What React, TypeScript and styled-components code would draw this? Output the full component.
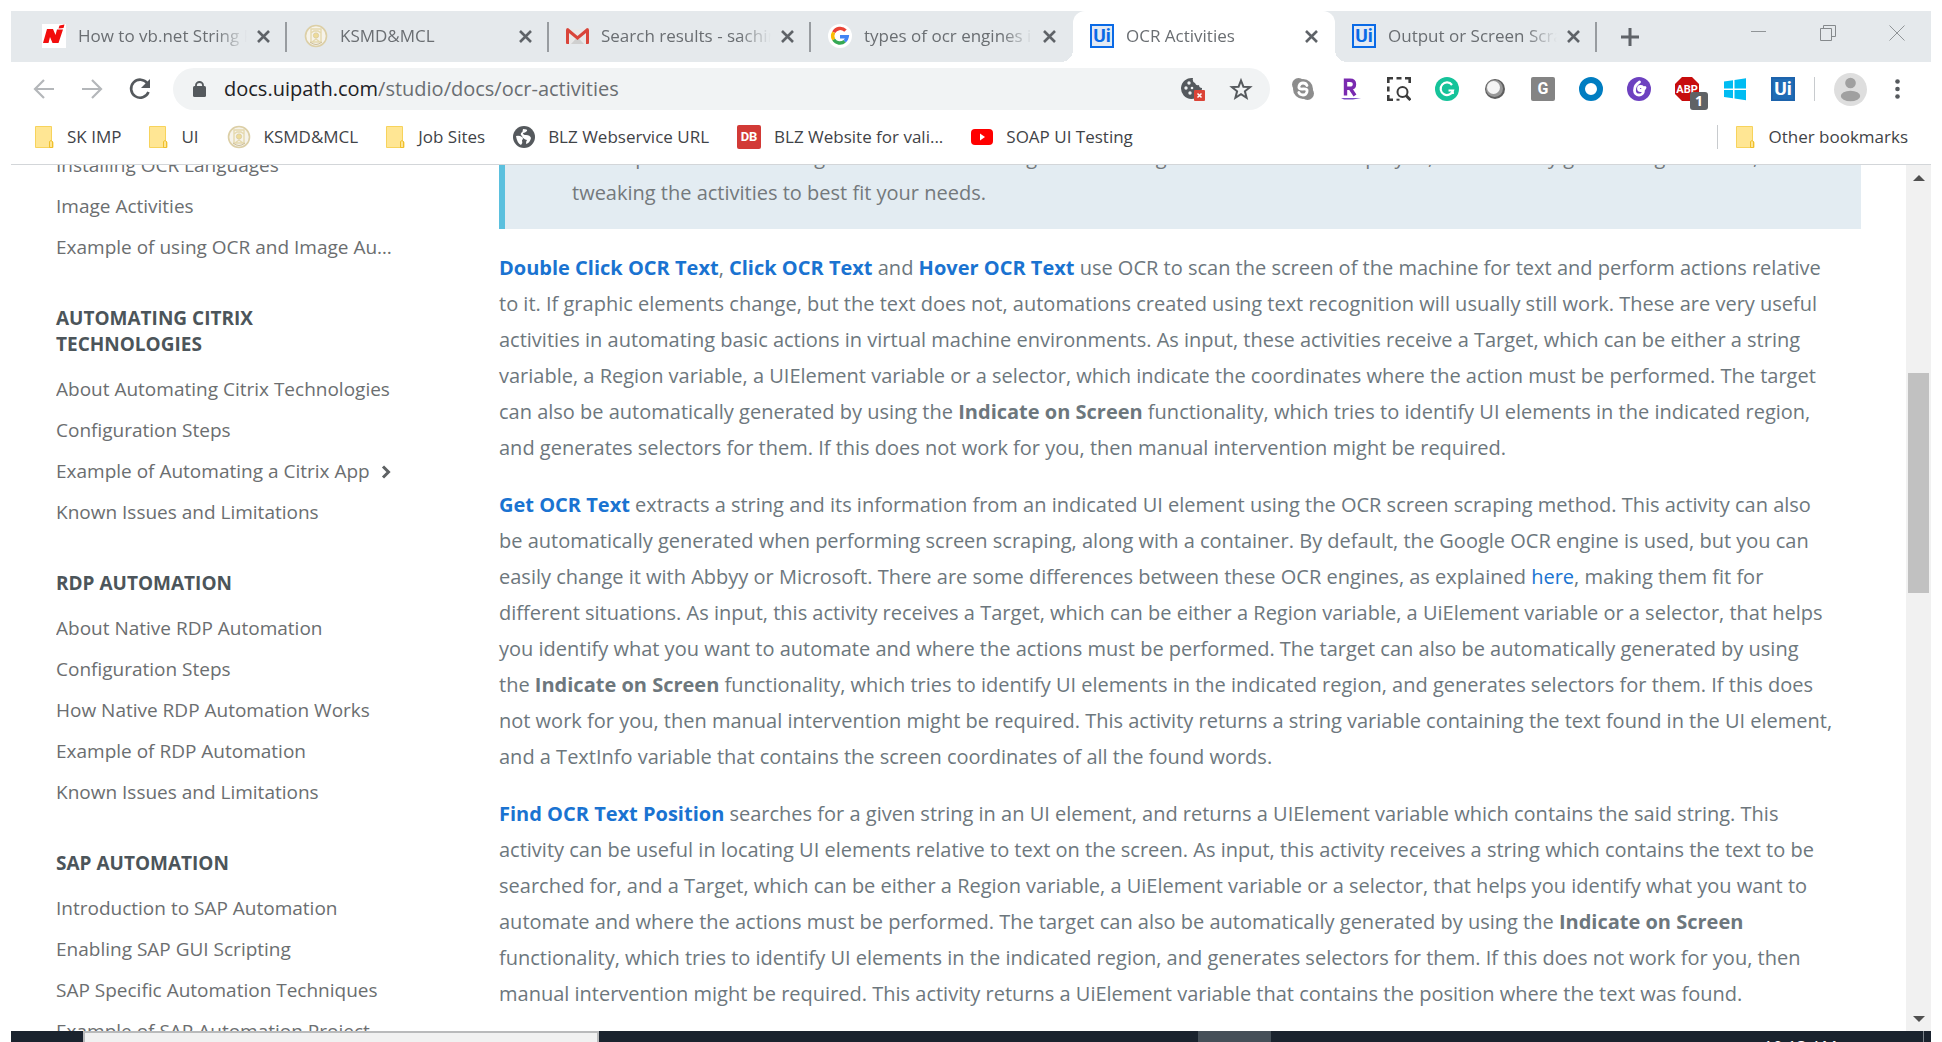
import React from "react";
import styled, { createGlobalStyle, css } from "styled-components";

const ui = `"Open Sans", "Noto Sans", sans-serif`;

const GlobalStyle = createGlobalStyle`
  * { box-sizing: border-box; }
  body { margin: 0; background: #fff; font-family: ${ui}; }
  button { border: 0; padding: 0; margin: 0; background: none; font: inherit; color: inherit; cursor: pointer; }
  a { color: inherit; text-decoration: none; }
  svg { display: block; flex: none; }
`;

const Screen = styled.div`
  display: flex;
  flex-direction: column;
  height: 100vh;
  padding: 11px 11px 0;
  overflow: hidden;
`;

/* ---------- tab strip ---------- */

const TabStrip = styled.header`
  display: flex;
  flex: none;
  height: 51px;
  padding-left: 14px;
  background: #e5e9ec;
`;

const Tabs = styled.nav`
  display: flex;
  flex: 0 1 1572px;
  min-width: 0;
`;

const TabBox = styled.div<{ $active?: boolean; $divider?: boolean }>`
  position: relative;
  display: flex;
  flex: 1 1 0;
  align-items: center;
  min-width: 0;
  padding: 0 17px 1px;
  color: #6a6e72;
  ${(p) =>
    p.$active &&
    css`
      background: #fff;
      border-radius: 12px 12px 0 0;
      &::before,
      &::after {
        content: "";
        position: absolute;
        bottom: 0;
        width: 12px;
        height: 12px;
      }
      &::before {
        left: -12px;
        background: radial-gradient(circle at 0 0, transparent 12px, #fff 12px);
      }
      &::after {
        right: -12px;
        background: radial-gradient(circle at 100% 0, transparent 12px, #fff 12px);
      }
    `}
  ${(p) =>
    p.$divider &&
    css`
      &::after {
        content: "";
        position: absolute;
        right: 0;
        top: 11px;
        width: 2px;
        height: 30px;
        background: #989ca0;
      }
    `}
`;

const TabButton = styled.button`
  display: flex;
  flex: 1;
  align-items: center;
  gap: 12px;
  min-width: 0;
  height: 100%;
  text-align: left;
`;

const TabTitle = styled.span`
  flex: 1;
  overflow: hidden;
  white-space: nowrap;
  font-size: 17px;
  line-height: 24px;
  margin-right: 10px;
  mask-image: linear-gradient(to right, #000 calc(100% - 32px), transparent);
`;

const NewTab = styled.button`
  display: flex;
  align-items: center;
  margin-left: 24px;
`;

const WindowControls = styled.div`
  display: flex;
  align-items: flex-start;
  gap: 53px;
  margin-left: auto;
  padding: 14px 26px 0 0;
`;

/* ---------- toolbar ---------- */

const Toolbar = styled.div`
  display: flex;
  flex: none;
  align-items: center;
  height: 54px;
  padding-right: 31px;
`;

const NavButtons = styled.div`
  display: flex;
  gap: 24px;
  padding: 0 21px;
`;

const AddressBar = styled.form`
  display: flex;
  flex: 1;
  align-items: center;
  min-width: 0;
  height: 42px;
  padding: 0 17px 0 20px;
  border-radius: 21px;
  background: #f1f3f4;
`;

const Address = styled.a`
  flex: 1;
  margin-left: 18px;
  font-size: 20px;
  line-height: 28px;
  color: #6a6e72;
  white-space: nowrap;
`;

const Host = styled.span`
  color: #202124;
`;

const AddressActions = styled.div`
  display: flex;
  gap: 24px;
`;

const Extensions = styled.div`
  display: flex;
  gap: 24px;
  margin-left: 21px;
`;

const ToolButton = styled.button`
  position: relative;
  display: flex;
  align-items: center;
  justify-content: center;
  width: 24px;
  height: 24px;
`;

const MenuButton = styled.button`
  display: flex;
  margin-left: 28px;
`;

const Divider = styled.span<{ $gap: number }>`
  width: 1px;
  height: 24px;
  margin: 0 ${(p) => p.$gap}px;
  background: #c8cbce;
`;

const Badge = styled.span`
  position: absolute;
  left: 15px;
  top: 15px;
  width: 18px;
  height: 18px;
  border-radius: 3px;
  background: #5f6265;
  color: #fff;
  font-size: 14px;
  font-weight: 700;
  line-height: 18px;
  text-align: center;
`;

const UiMark = styled.span<{ $solid?: boolean }>`
  display: flex;
  flex: none;
  align-items: center;
  justify-content: center;
  width: 24px;
  height: 24px;
  border: 2px solid ${(p) => (p.$solid ? "#1d63ac" : "#0a6ae6")};
  background: ${(p) => (p.$solid ? "#1f6cb5" : "#e3eaf4")};
  color: ${(p) => (p.$solid ? "#fff" : "#0a6ae6")};
  font-family: Roboto, sans-serif;
  font-size: 19px;
  font-weight: 700;
  line-height: 20px;
`;

const LetterTile = styled.span<{ $bg: string; $size: number }>`
  display: flex;
  flex: none;
  align-items: center;
  justify-content: center;
  width: 24px;
  height: 24px;
  border-radius: 2px;
  background: ${(p) => p.$bg};
  color: #fff;
  font-family: Roboto, sans-serif;
  font-size: ${(p) => p.$size}px;
  font-weight: 700;
  line-height: 24px;
`;

/* ---------- bookmarks ---------- */

const Bookmarks = styled.nav`
  display: flex;
  flex: none;
  align-items: center;
  height: 49px;
  padding: 0 23px 6px 24px;
  border-bottom: 1px solid #d3d6d9;
`;

const BookmarkList = styled.div`
  display: flex;
  gap: 28px;
`;

const Bookmark = styled.a`
  display: flex;
  align-items: center;
  gap: 13px;
  color: #3f4347;
  font-size: 17px;
  line-height: 24px;
  white-space: nowrap;
`;

const OtherBookmarks = styled.div`
  display: flex;
  align-items: center;
  margin-left: auto;
`;

/* ---------- page ---------- */

const Viewport = styled.div`
  display: flex;
  flex: 1;
  min-height: 0;
  overflow: hidden;
`;

const Sidebar = styled.aside`
  flex: 0 0 488px;
  margin-top: -20px;
  padding-left: 45px;
`;

const NavGroup = styled.section`
  width: 340px;
  margin-bottom: 37px;
`;

const GroupTitle = styled.h2`
  width: 260px;
  margin: 0 0 12px;
  color: #4c555a;
  font-size: 19px;
  font-weight: 700;
  line-height: 26px;
`;

const NavItem = styled.a`
  display: flex;
  align-items: center;
  gap: 11px;
  color: #6b6e70;
  font-size: 19px;
  line-height: 41px;
`;

const NavLabel = styled.span`
  overflow: hidden;
  white-space: nowrap;
  text-overflow: ellipsis;
`;

const Article = styled.main`
  flex: 1;
  min-width: 0;
  margin-top: -26px;
  padding-right: 45px;
  color: #6d777d;
  font-size: 20px;
  line-height: 36px;
`;

const Callout = styled.blockquote`
  margin: 0;
  padding: 0 0 18px 67px;
  border-left: 6px solid #5bc0de;
  background: #e3ecf2;
  color: #74797c;
`;

const Paragraph = styled.p`
  margin: 21px 0 0;
`;

const DocLink = styled.a<{ $strong?: boolean }>`
  color: #1a73d1;
  font-weight: ${(p) => (p.$strong ? 700 : 400)};
`;

const Scrollbar = styled.div`
  display: flex;
  flex: 0 0 25px;
  flex-direction: column;
  align-items: center;
  justify-content: space-between;
  padding: 10px 2px 9px;
  background: #f1f1f1;
`;

const Track = styled.div`
  flex: 1;
  align-self: stretch;
  padding-top: 192px;
`;

const Thumb = styled.div`
  height: 220px;
  background: #c1c1c1;
`;

/* ---------- taskbar ---------- */

const Taskbar = styled.footer`
  display: flex;
  flex: none;
  height: 11px;
  padding-left: 72px;
  overflow: hidden;
  background: #1a232e;
`;

const SearchBox = styled.input`
  width: 516px;
  height: 44px;
  border: 2px solid #b9babb;
  background: #f1f1f1;
`;

const RunningApp = styled.span`
  width: 73px;
  height: 44px;
  margin-left: 599px;
  background: #465059;
`;

const Clock = styled.time`
  margin-left: auto;
  margin-right: 7px;
  padding-right: 86px;
  border-right: 1px solid #7b838a;
  color: #fff;
  font-size: 17px;
  line-height: 32px;
`;

/* ---------- drawings ---------- */

const CloseIcon = () => (
  <svg width="13" height="13" viewBox="0 0 13 13" stroke="#5f6368" strokeWidth="2.6">
    <path d="M1 1l11 11M12 1L1 12" />
  </svg>
);

const NIcon = () => (
  <svg width="24" height="24" viewBox="0 0 24 24">
    <path fill="#fff" d="M0 0h24v24H0z" />
    <path fill="#f20d0d" d="M5 5h6l2.500 6L15 5.500h6L16.500 19h-6L8 13l-1.500 6H1z" />
    <path fill="#f20d0d" d="M17.500 1.500L22.500.500 21.500 4l-5 .5z" />
  </svg>
);

const SealIcon = () => (
  <svg width="24" height="24" viewBox="0 0 24 24" fill="none" stroke="#dccfa6">
    <circle cx="12" cy="12" r="10.5" fill="#f6f3ea" strokeWidth="1.6" />
    <path d="M7 5h10v13H7zM7 9l3-2h4l3 2M8 18l4-3 4 3" stroke="#e5d9ae" strokeWidth="1.4" />
    <circle cx="12" cy="11.5" r="2.6" fill="#efdc98" />
    <path d="M6 18q6 5 12 0" stroke="#cbbd99" />
  </svg>
);

const GmailIcon = () => (
  <svg width="23" height="24" viewBox="0 0 23 24">
    <path fill="#e8e8e8" d="M2 5h19v15H2z" />
    <path fill="#cfcfcf" d="M5 20l6.5-7 6.500 7z" />
    <path fill="#d9453a" d="M0 6q0-2 2-2l9.500 8L21 4q2 0 2 2v13q0 1-1 1h-2V9l-8.500 7L3 9v11H1q-1 0-1-1z" />
  </svg>
);

const GoogleIcon = () => (
  <svg width="24" height="24" viewBox="0 0 24 24">
    <circle cx="12" cy="12" r="12" fill="#fff" />
    <g fill="none" strokeWidth="3.4">
      <path stroke="#ea4335" d="M17.5 6.700A7.300 7.300 0 0 0 5.700 8.300" />
      <path stroke="#fbbc05" d="M5.700 8.300a7.300 7.300 0 0 0 0 7.400" />
      <path stroke="#34a853" d="M5.700 15.700a7.300 7.300 0 0 0 11 1.500" />
      <path stroke="#4285f4" d="M16.700 17.200a7.300 7.300 0 0 0 2.500-4.500H12" />
    </g>
  </svg>
);

const FolderIcon = () => (
  <svg width="19" height="22" viewBox="0 0 19 22">
    <path fill="#ffe694" stroke="#f7d35c" d="M.5.5h16v14l1.500 2v5H.5z" />
    <path fill="none" stroke="#efbf2d" d="M14.500 21.500v-6q1.500-2 3 0v6z" />
  </svg>
);

const GlobeIcon = () => (
  <svg width="22" height="22" viewBox="0 0 22 22">
    <circle cx="11" cy="11" r="11" fill="#55595d" />
    <path fill="#fff" d="M3 10q3-1 6 1 2 2 0 3 1 3-1 5-4-2-5-9zM10 3q5 0 4 2-2 2-4 2 0 2 3 2 4 0 5 3-1 5-5 6 0-3 1-4-4-1-5-4-2-1-1-3 2-1 2-4z" />
  </svg>
);

const YoutubeIcon = () => (
  <svg width="22" height="16" viewBox="0 0 22 16">
    <rect width="22" height="16" rx="4" fill="#f00" />
    <path fill="#fff" d="M9 4.500v7l5-3.500z" />
  </svg>
);

const ArrowIcon = ({ flip }: { flip?: boolean }) => (
  <svg width="24" height="24" viewBox="0 0 24 24" fill="none" stroke="#b4b7ba" strokeWidth="2.2">
    <path d={flip ? "M2 12h19M12 3l9 9-9 9" : "M22 12H3M12 3l-9 9 9 9"} />
  </svg>
);

const ReloadIcon = () => (
  <svg width="24" height="24" viewBox="0 0 24 24">
    <path fill="none" stroke="#55595d" strokeWidth="2.6" d="M19.500 6.500A9 9 0 1 0 20.500 15" />
    <path fill="#55595d" d="M22 2v9h-9z" />
  </svg>
);

const LockIcon = () => (
  <svg width="13" height="16" viewBox="0 0 13 16">
    <rect y="5" width="13" height="11" rx="1.5" fill="#55595d" />
    <path d="M3 6V4a3.500 3 0 0 1 7 0v2" fill="none" stroke="#55595d" strokeWidth="1.8" />
  </svg>
);

const CookieIcon = () => (
  <svg width="24" height="24" viewBox="0 0 24 24">
    <path fill="#55595d" d="M12 1a10.500 10.500 0 1 0 9 10q-3 0-3-3-3 1-4-2-3-1-2-5z" />
    <g fill="#f1f3f4">
      <circle cx="8" cy="6" r="1.7" />
      <circle cx="5" cy="11" r="1.7" />
      <circle cx="11" cy="11" r="1.3" />
      <circle cx="9" cy="16" r="1.7" />
    </g>
    <rect x="13" y="13" width="11" height="11" rx="1" fill="#db4437" />
    <path d="M16.500 16.500l4 4M20.500 16.500l-4 4" stroke="#fff" strokeWidth="1.5" />
  </svg>
);

const StarIcon = () => (
  <svg width="24" height="24" viewBox="0 0 24 24">
    <path fill="none" stroke="#55595d" strokeWidth="2" d="M12 3.500l2.400 6.200 6.700.4-5.200 4.200 1.700 6.500-5.600-3.600-5.600 3.600 1.700-6.500L2.900 10.100l6.700-.4z" />
  </svg>
);

const SkypeIcon = () => (
  <svg width="24" height="24" viewBox="0 0 24 24">
    <circle cx="7.5" cy="7.5" r="6.5" fill="#8d8d8d" />
    <circle cx="16.5" cy="16.5" r="6.5" fill="#8d8d8d" />
    <circle cx="12" cy="12" r="10" fill="#8d8d8d" />
    <path fill="none" stroke="#fff" strokeWidth="2.8" strokeLinecap="round" d="M16 8.500Q15 6 12 6T8 9.200 12 12t4 2.800T12 18t-4.200-2.500" />
  </svg>
);

const RakutenIcon = () => (
  <svg width="24" height="24" viewBox="0 0 24 24">
    <path fill="none" stroke="#7a2ab0" strokeWidth="3.4" d="M6.500 18.500V3.200H11q4.500 0 4.500 4t-4.500 4H7M11 11l5 7.500" />
    <path fill="#7a4bc4" d="M2 21h20l-8 1.500H5z" />
  </svg>
);

const SelectionIcon = () => (
  <svg width="24" height="24" viewBox="0 0 24 24" fill="none" stroke="#3c3c3c">
    <path strokeWidth="2.6" d="M1.300 6V1.300H6M9.500 1.300h5M18 1.300h4.700V6M1.300 9.500v5M1.300 18v4.700H6" />
    <circle cx="15.500" cy="15" r="5" strokeWidth="2" />
    <path strokeWidth="3" d="M19 18.500l4.500 4.500" />
    <path strokeWidth="2" d="M9.500 22.700h3" />
  </svg>
);

const GrammarlyIcon = () => (
  <svg width="24" height="24" viewBox="0 0 24 24">
    <circle cx="12" cy="12" r="12" fill="#15c39a" />
    <path fill="none" stroke="#fff" strokeWidth="2.2" d="M17 8a6.300 6.300 0 1 0 1 5.500h-4.500M17.800 13v4" />
  </svg>
);

const BallIcon = () => (
  <svg width="24" height="24" viewBox="0 0 24 24">
    <circle cx="12" cy="12" r="10" fill="#5e5e5e" />
    <circle cx="11.5" cy="11.5" r="8.5" fill="#999" />
    <circle cx="10.5" cy="10.5" r="6.5" fill="#f5f5f5" />
  </svg>
);

const RingIcon = () => (
  <svg width="24" height="24" viewBox="0 0 24 24">
    <circle cx="12" cy="12" r="9" fill="#fff" stroke="#007dc1" strokeWidth="6" />
  </svg>
);

const LoopIcon = () => (
  <svg width="24" height="24" viewBox="0 0 24 24">
    <circle cx="12" cy="12" r="12" fill="#6d41c0" />
    <path fill="none" stroke="#fff" strokeWidth="2.8" strokeLinecap="round" d="M12.500 5Q7.500 8 7.500 13.500a4.500 4.500 0 1 0 9 0q0-4-3-4-2 0-2 2t2 2q3 0 4.500-3" />
  </svg>
);

const AbpIcon = () => (
  <svg width="24" height="24" viewBox="0 0 24 24">
    <path fill="#c70d0d" d="M7 0h10l7 7v10l-7 7H7l-7-7V7z" />
    <text x="12" y="16" fill="#fff" fontFamily="Roboto, sans-serif" fontSize="11" fontWeight="700" textAnchor="middle">ABP</text>
  </svg>
);

const WindowsIcon = () => (
  <svg width="24" height="24" viewBox="0 0 24 24">
    <path fill="#00bcf2" d="M1 4.500l9-1.300v8.300H1zM11.500 3L23 1.300v10.200H11.500zM1 13h9v8.300L1 20zM11.500 13H23v10.200l-11.500-1.700z" />
  </svg>
);

const AvatarIcon = () => (
  <svg width="33" height="33" viewBox="0 0 33 33">
    <circle cx="16.5" cy="16.5" r="16.5" fill="#dedede" />
    <circle cx="16.5" cy="10" r="5.3" fill="#a0a0a0" />
    <ellipse cx="16.5" cy="23" rx="9.7" ry="5.3" fill="#a0a0a0" />
  </svg>
);

const DotsIcon = () => (
  <svg width="5" height="20" viewBox="0 0 5 20" fill="#55595d">
    <circle cx="2.5" cy="2.5" r="2.3" />
    <circle cx="2.5" cy="10" r="2.3" />
    <circle cx="2.5" cy="17.5" r="2.3" />
  </svg>
);

const ChevronIcon = () => (
  <svg width="10" height="14" viewBox="0 0 10 14" fill="none" stroke="#5f6264" strokeWidth="3">
    <path d="M2 1.500L7.500 7 2 12.500" />
  </svg>
);

/* ---------- data ---------- */

const tabs = [
  { title: "How to vb.net String Functions", icon: <NIcon />, divider: true },
  { title: "KSMD&MCL", icon: <SealIcon />, divider: true },
  { title: "Search results - sachin", icon: <GmailIcon />, divider: true },
  { title: "types of ocr engines in", icon: <GoogleIcon /> },
  { title: "OCR Activities", icon: <UiMark aria-hidden>Ui</UiMark>, active: true },
  { title: "Output or Screen Scraping", icon: <UiMark aria-hidden>Ui</UiMark>, divider: true },
];

const bookmarks = [
  { name: "SK IMP", icon: <FolderIcon /> },
  { name: "UI", icon: <FolderIcon /> },
  { name: "KSMD&MCL", icon: <SealIcon /> },
  { name: "Job Sites", icon: <FolderIcon /> },
  { name: "BLZ Webservice URL", icon: <GlobeIcon /> },
  { name: "BLZ Website for vali...", icon: <LetterTile $bg="#d23a36" $size={13} aria-hidden>DB</LetterTile> },
  { name: "SOAP UI Testing", icon: <YoutubeIcon /> },
];

const extensions = [
  { name: "Skype", icon: <SkypeIcon /> },
  { name: "Rakuten", icon: <RakutenIcon /> },
  { name: "Search selection", icon: <SelectionIcon /> },
  { name: "Grammarly", icon: <GrammarlyIcon /> },
  { name: "Recorder", icon: <BallIcon /> },
  { name: "G", icon: <LetterTile $bg="#848484" $size={16} aria-hidden>G</LetterTile> },
  { name: "Okta", icon: <RingIcon /> },
  { name: "Loop", icon: <LoopIcon /> },
  { name: "Adblock Plus", icon: <AbpIcon />, badge: "1" },
  { name: "Windows", icon: <WindowsIcon /> },
  { name: "UiPath", icon: <UiMark $solid aria-hidden>Ui</UiMark> },
];

const groups: { title?: string; items: string[]; expandable?: string }[] = [
  { items: ["Installing OCR Languages", "Image Activities", "Example of using OCR and Image Automation"] },
  {
    title: "AUTOMATING CITRIX TECHNOLOGIES",
    items: ["About Automating Citrix Technologies", "Configuration Steps", "Example of Automating a Citrix App", "Known Issues and Limitations"],
    expandable: "Example of Automating a Citrix App",
  },
  {
    title: "RDP AUTOMATION",
    items: ["About Native RDP Automation", "Configuration Steps", "How Native RDP Automation Works", "Example of RDP Automation", "Known Issues and Limitations"],
  },
  {
    title: "SAP AUTOMATION",
    items: ["Introduction to SAP Automation", "Enabling SAP GUI Scripting", "SAP Specific Automation Techniques", "Example of SAP Automation Project"],
  },
];

export default function App() {
  return (
    <Screen>
      <GlobalStyle />
      <TabStrip>
        <Tabs>
          {tabs.map((t) => (
            <TabBox key={t.title} $active={t.active} $divider={t.divider}>
              <TabButton>
                {t.icon}
                <TabTitle>{t.title}</TabTitle>
              </TabButton>
              <button aria-label="Close tab"><CloseIcon /></button>
            </TabBox>
          ))}
        </Tabs>
        <NewTab aria-label="New tab">
          <svg width="18" height="18" viewBox="0 0 18 18" stroke="#5f6368" strokeWidth="3"><path d="M9 0v18M0 9h18" /></svg>
        </NewTab>
        <WindowControls>
          <button aria-label="Minimize">
            <svg width="16" height="16" viewBox="0 0 16 16" stroke="#909497"><path d="M0 6.500h15" /></svg>
          </button>
          <button aria-label="Restore">
            <svg width="16" height="16" viewBox="0 0 16 16" fill="none" stroke="#85898c"><path d="M.5 3.500h11v12H.5zM3.500 3.500v-3h12v11h-4" /></svg>
          </button>
          <button aria-label="Close">
            <svg width="16" height="16" viewBox="0 0 16 16" stroke="#909497"><path d="M.5.5l15 15M15.500.5l-15 15" /></svg>
          </button>
        </WindowControls>
      </TabStrip>

      <Toolbar>
        <NavButtons>
          <ToolButton aria-label="Back"><ArrowIcon /></ToolButton>
          <ToolButton aria-label="Forward"><ArrowIcon flip /></ToolButton>
          <ToolButton aria-label="Reload"><ReloadIcon /></ToolButton>
        </NavButtons>
        <AddressBar>
          <LockIcon />
          <Address href="#"><Host>docs.uipath.com</Host>/studio/docs/ocr-activities</Address>
          <AddressActions>
            <ToolButton type="button" aria-label="Cookies blocked"><CookieIcon /></ToolButton>
            <ToolButton type="button" aria-label="Bookmark this page"><StarIcon /></ToolButton>
          </AddressActions>
        </AddressBar>
        <Extensions>
          {extensions.map((e) => (
            <ToolButton key={e.name} aria-label={e.name}>
              {e.icon}
              {e.badge && <Badge>{e.badge}</Badge>}
            </ToolButton>
          ))}
        </Extensions>
        <Divider $gap={19} />
        <button aria-label="Profile"><AvatarIcon /></button>
        <MenuButton aria-label="Menu"><DotsIcon /></MenuButton>
      </Toolbar>

      <Bookmarks>
        <BookmarkList>
          {bookmarks.map((b) => (
            <Bookmark key={b.name} href="#">{b.icon}{b.name}</Bookmark>
          ))}
        </BookmarkList>
        <OtherBookmarks>
          <Divider $gap={18} />
          <Bookmark href="#"><FolderIcon />Other bookmarks</Bookmark>
        </OtherBookmarks>
      </Bookmarks>

      <Viewport>
        <Sidebar>
          {groups.map((g, i) => (
            <NavGroup key={i}>
              {g.title && <GroupTitle>{g.title}</GroupTitle>}
              {g.items.map((item) => (
                <NavItem key={item} href="#">
                  <NavLabel>{item}</NavLabel>
                  {g.expandable === item && <ChevronIcon />}
                </NavItem>
              ))}
            </NavGroup>
          ))}
        </Sidebar>
        <Article>
          <Callout>
            The implementations using OCR on different images in real longer workflows once deployed, and this may give stronger results,<br />
            tweaking the activities to best fit your needs.
          </Callout>
          <Paragraph>
            <DocLink $strong href="#">Double Click OCR Text</DocLink>, <DocLink $strong href="#">Click OCR Text</DocLink> and <DocLink $strong href="#">Hover OCR Text</DocLink> use OCR to scan the screen of the machine for text and perform actions relative<br />
            to it. If graphic elements change, but the text does not, automations created using text recognition will usually still work. These are very useful<br />
            activities in automating basic actions in virtual machine environments. As input, these activities receive a Target, which can be either a string<br />
            variable, a Region variable, a UIElement variable or a selector, which indicate the coordinates where the action must be performed. The target<br />
            can also be automatically generated by using the <strong>Indicate on Screen</strong> functionality, which tries to identify UI elements in the indicated region,<br />
            and generates selectors for them. If this does not work for you, then manual intervention might be required.
          </Paragraph>
          <Paragraph>
            <DocLink $strong href="#">Get OCR Text</DocLink> extracts a string and its information from an indicated UI element using the OCR screen scraping method. This activity can also<br />
            be automatically generated when performing screen scraping, along with a container. By default, the Google OCR engine is used, but you can<br />
            easily change it with Abbyy or Microsoft. There are some differences between these OCR engines, as explained <DocLink href="#">here</DocLink>, making them fit for<br />
            different situations. As input, this activity receives a Target, which can be either a Region variable, a UiElement variable or a selector, that helps<br />
            you identify what you want to automate and where the actions must be performed. The target can also be automatically generated by using<br />
            the <strong>Indicate on Screen</strong> functionality, which tries to identify UI elements in the indicated region, and generates selectors for them. If this does<br />
            not work for you, then manual intervention might be required. This activity returns a string variable containing the text found in the UI element,<br />
            and a TextInfo variable that contains the screen coordinates of all the found words.
          </Paragraph>
          <Paragraph>
            <DocLink $strong href="#">Find OCR Text Position</DocLink> searches for a given string in an UI element, and returns a UIElement variable which contains the said string. This<br />
            activity can be useful in locating UI elements relative to text on the screen. As input, this activity receives a string which contains the text to be<br />
            searched for, and a Target, which can be either a Region variable, a UiElement variable or a selector, that helps you identify what you want to<br />
            automate and where the actions must be performed. The target can also be automatically generated by using the <strong>Indicate on Screen</strong><br />
            functionality, which tries to identify UI elements in the indicated region, and generates selectors for them. If this does not work for you, then<br />
            manual intervention might be required. This activity returns a UiElement variable that contains the position where the text was found.
          </Paragraph>
        </Article>
        <Scrollbar>
          <svg width="12" height="6" viewBox="0 0 12 6" fill="#505050"><path d="M6 0l6 6H0z" /></svg>
          <Track><Thumb /></Track>
          <svg width="12" height="6" viewBox="0 0 12 6" fill="#505050"><path d="M0 0h12L6 6z" /></svg>
        </Scrollbar>
      </Viewport>

      <Taskbar>
        <SearchBox aria-label="Search" />
        <RunningApp />
        <Clock>10:13 AM</Clock>
      </Taskbar>
    </Screen>
  );
}
